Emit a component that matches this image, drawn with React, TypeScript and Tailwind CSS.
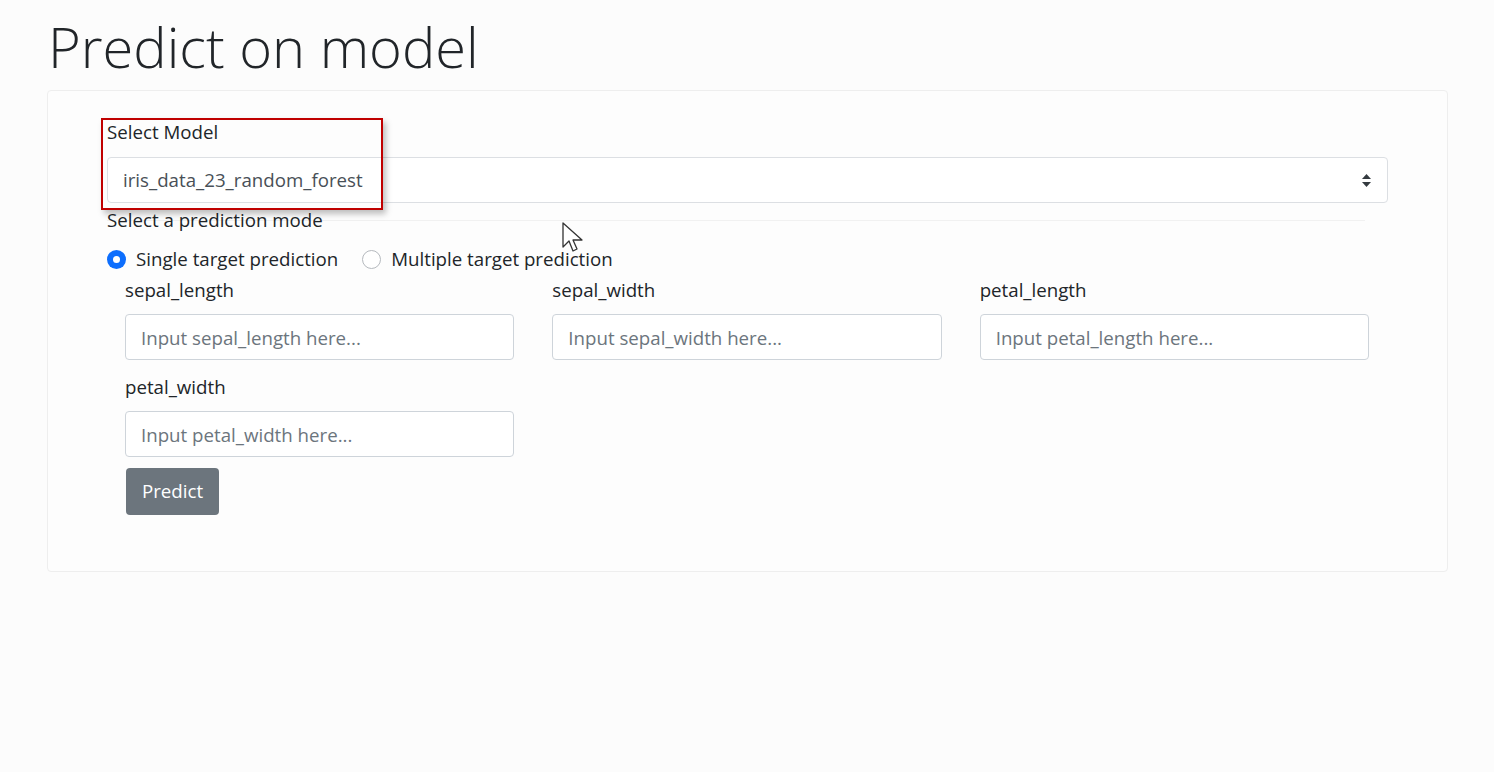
import React from 'react';

const fields = ['sepal_length', 'sepal_width', 'petal_length', 'petal_width'];

const Field: React.FC<{ name: string }> = ({ name }) => (
  <div className="flex flex-col">
    <label className="text-[18.7px] leading-6 text-[#212529]">{name}</label>
    <input
      type="text"
      placeholder={`Input ${name} here...`}
      className="mt-3 h-[46px] w-full rounded-[4px] border border-[#ced4da] bg-white px-[15px] text-[18.7px] text-[#495057] placeholder:text-[#6c757d] outline-none"
    />
  </div>
);

const Radio: React.FC<{ checked: boolean; label: string; onSelect: () => void }> = ({ checked, label, onSelect }) => (
  <label className="flex cursor-pointer items-center gap-[10px]" onClick={onSelect}>
    {checked ? (
      <span className="flex h-[19px] w-[19px] items-center justify-center rounded-full bg-[#0d6efd]">
        <span className="h-[7px] w-[7px] rounded-full bg-white" />
      </span>
    ) : (
      <span className="h-[19px] w-[19px] rounded-full border border-[#b5b9be] bg-white" />
    )}
    {label}
  </label>
);

export default function App() {
  const [mode, setMode] = React.useState<'single' | 'multiple'>('single');

  return (
    <div
      className="relative min-h-[772px] w-full bg-[#fcfcfc] pl-[47px] pr-[46px] pt-[10px]"
      style={{ fontFamily: '"Open Sans", "Noto Sans", sans-serif' }}
    >
      <h1 className="mb-[8px] pl-px text-[56px] font-light leading-[72px] text-[#212529]">
        Predict on model
      </h1>

      <div className="rounded-[4px] border border-[#eeeeee] bg-[#fdfdfd] px-[59px] pt-[29px] pb-[56px]">
        <label className="block text-[18.7px] leading-6 text-[#212529]">Select Model</label>
        <div className="relative mt-[13px] flex h-[46px] items-center rounded-[4px] border border-[#dcdfe3] bg-white pl-[15px] pr-4">
          <span className="flex-1 text-[18.7px] text-[#495057]">iris_data_23_random_forest</span>
          <svg width="9" height="13" viewBox="0 0 9 13" className="text-[#343a40]">
            <path d="M4.5 0 L9 5 H0 Z" fill="currentColor" />
            <path d="M4.5 13 L9 8 H0 Z" fill="currentColor" />
          </svg>
        </div>

        <div className="relative mt-[5px]">
          <div className="absolute left-0 right-[23px] top-3 border-t border-[#f1f1f1]" />
          <p className="relative text-[18.7px] leading-6 text-[#212529]">Select a prediction mode</p>
        </div>

        <div className="mt-[15px] flex items-center gap-[24px] text-[18.7px] leading-6 text-[#212529]">
          <Radio checked={mode === 'single'} label="Single target prediction" onSelect={() => setMode('single')} />
          <Radio checked={mode === 'multiple'} label="Multiple target prediction" onSelect={() => setMode('multiple')} />
        </div>

        <div className="mt-[7px] ml-[18px] mr-[19px]">
          <div className="grid grid-cols-3 gap-x-[38px] gap-y-[15px]">
            {fields.map((f) => (
              <Field key={f} name={f} />
            ))}
          </div>
          <button className="mt-[11px] ml-px h-[47px] w-[93px] rounded-[4px] bg-[#6c757d] text-[18.7px] text-white">
            Predict
          </button>
        </div>
      </div>

      {/* annotation callout */}
      <div className="pointer-events-none absolute left-[101px] top-[118px] h-[92px] w-[282px] border-2 border-[#c00000] shadow-[3px_4px_6px_rgba(0,0,0,0.25)]" />

      {/* mouse cursor */}
      <svg className="pointer-events-none absolute left-[561px] top-[221px]" width="26" height="34" viewBox="0 0 26 34">
        <path
          d="M2 2 L2 26 L8 20 L12 30 L16 28 L12 19 L21 19 Z"
          fill="white"
          stroke="#333"
          strokeWidth="1.3"
          strokeLinejoin="round"
        />
      </svg>
    </div>
  );
}
